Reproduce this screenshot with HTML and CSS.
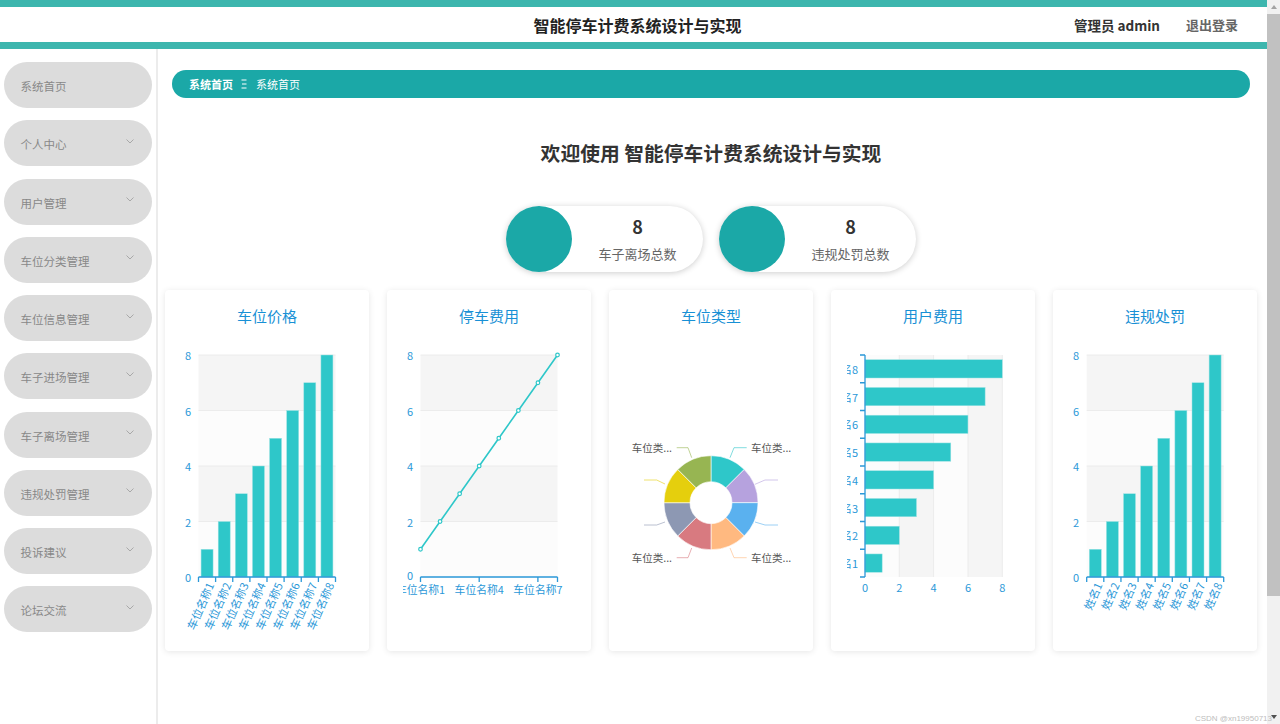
FILE: index.html
```html
<!DOCTYPE html>
<html lang="zh-CN">
<head>
<meta charset="utf-8">
<title>智能停车计费系统设计与实现</title>
<link rel="stylesheet" href="styles.css">
</head>
<body>
<div class="page">
  <div class="app">
    <header class="header">
      <div></div>
      <div class="title">智能停车计费系统设计与实现</div>
      <div class="user">
        <span class="admin">管理员 admin</span>
        <span class="logout">退出登录</span>
      </div>
    </header>
    <div class="main">
      <nav class="sidebar">
        <div class="menu-item"><span>系统首页</span></div>
        <div class="menu-item"><span>个人中心</span><svg class="chev" viewBox="0 0 8 5" width="8" height="5"><polyline points="0.5,0.5 4,4 7.5,0.5"/></svg></div>
        <div class="menu-item"><span>用户管理</span><svg class="chev" viewBox="0 0 8 5" width="8" height="5"><polyline points="0.5,0.5 4,4 7.5,0.5"/></svg></div>
        <div class="menu-item"><span>车位分类管理</span><svg class="chev" viewBox="0 0 8 5" width="8" height="5"><polyline points="0.5,0.5 4,4 7.5,0.5"/></svg></div>
        <div class="menu-item"><span>车位信息管理</span><svg class="chev" viewBox="0 0 8 5" width="8" height="5"><polyline points="0.5,0.5 4,4 7.5,0.5"/></svg></div>
        <div class="menu-item"><span>车子进场管理</span><svg class="chev" viewBox="0 0 8 5" width="8" height="5"><polyline points="0.5,0.5 4,4 7.5,0.5"/></svg></div>
        <div class="menu-item"><span>车子离场管理</span><svg class="chev" viewBox="0 0 8 5" width="8" height="5"><polyline points="0.5,0.5 4,4 7.5,0.5"/></svg></div>
        <div class="menu-item"><span>违规处罚管理</span><svg class="chev" viewBox="0 0 8 5" width="8" height="5"><polyline points="0.5,0.5 4,4 7.5,0.5"/></svg></div>
        <div class="menu-item"><span>投诉建议</span><svg class="chev" viewBox="0 0 8 5" width="8" height="5"><polyline points="0.5,0.5 4,4 7.5,0.5"/></svg></div>
        <div class="menu-item"><span>论坛交流</span><svg class="chev" viewBox="0 0 8 5" width="8" height="5"><polyline points="0.5,0.5 4,4 7.5,0.5"/></svg></div>
      </nav>
      <section class="content">
        <div class="breadcrumb">
          <span class="crumb-strong">系统首页</span>
          <svg class="sep" viewBox="0 0 6 10" width="6" height="10"><path d="M0.5 1H5.5M1 5H5.5M0.5 9H5.5"/></svg>
          <span>系统首页</span>
        </div>
        <h1 class="welcome">欢迎使用 智能停车计费系统设计与实现</h1>
        <div class="stats">
          <div class="stat">
            <div class="stat-circle"></div>
            <div class="stat-text"><div class="stat-num">8</div><div class="stat-label">车子离场总数</div></div>
          </div>
          <div class="stat">
            <div class="stat-circle"></div>
            <div class="stat-text"><div class="stat-num">8</div><div class="stat-label">违规处罚总数</div></div>
          </div>
        </div>
        <div class="charts">
          <!-- Chart 1 -->
          <div class="card">
            <div class="card-title">车位价格</div>
            <svg class="chart" viewBox="0 0 204 300" width="204" height="300">
              <rect class="band-a" x="33.5" y="19" width="137" height="55.5"/>
              <rect class="band-b" x="33.5" y="74.5" width="137" height="55.5"/>
              <rect class="band-a" x="33.5" y="130" width="137" height="55.5"/>
              <rect class="band-b" x="33.5" y="185.5" width="137" height="55.5"/>
              <path class="grid" d="M33.5 19H170.5M33.5 74.5H170.5M33.5 130H170.5M33.5 185.5H170.5"/>
              <g class="bar">
                <rect x="36.06" y="213.25" width="12" height="27.75"/>
                <rect x="53.19" y="185.5" width="12" height="55.5"/>
                <rect x="70.31" y="157.75" width="12" height="83.25"/>
                <rect x="87.44" y="130" width="12" height="111"/>
                <rect x="104.56" y="102.25" width="12" height="138.75"/>
                <rect x="121.69" y="74.5" width="12" height="166.5"/>
                <rect x="138.81" y="46.75" width="12" height="194.25"/>
                <rect x="155.94" y="19" width="12" height="222"/>
              </g>
              <path class="axis" d="M33.5 241H170.5M33.5 241V246M50.6 241V246M67.75 241V246M84.9 241V246M102 241V246M119.1 241V246M136.25 241V246M153.4 241V246M170.5 241V246"/>
              <g class="ylab">
                <text x="26" y="19">8</text><text x="26" y="74.5">6</text><text x="26" y="130">4</text><text x="26" y="185.5">2</text><text x="26" y="241">0</text>
              </g>
              <g class="xrot">
                <text transform="translate(45 247) rotate(-66)">车位名称1</text>
                <text transform="translate(62.2 247) rotate(-66)">车位名称2</text>
                <text transform="translate(79.3 247) rotate(-66)">车位名称3</text>
                <text transform="translate(96.4 247) rotate(-66)">车位名称4</text>
                <text transform="translate(113.6 247) rotate(-66)">车位名称5</text>
                <text transform="translate(130.7 247) rotate(-66)">车位名称6</text>
                <text transform="translate(147.8 247) rotate(-66)">车位名称7</text>
                <text transform="translate(164.9 247) rotate(-66)">车位名称8</text>
              </g>
            </svg>
          </div>
          <!-- Chart 2 -->
          <div class="card">
            <div class="card-title">停车费用</div>
            <svg class="chart" viewBox="0 0 204 300" width="204" height="300">
              <defs><clipPath id="clip2"><rect x="16" y="0" width="188" height="300"/></clipPath></defs>
              <rect class="band-a" x="33.5" y="19" width="137" height="55.5"/>
              <rect class="band-b" x="33.5" y="74.5" width="137" height="55.5"/>
              <rect class="band-a" x="33.5" y="130" width="137" height="55.5"/>
              <rect class="band-b" x="33.5" y="185.5" width="137" height="55.5"/>
              <path class="grid" d="M33.5 19H170.5M33.5 74.5H170.5M33.5 130H170.5M33.5 185.5H170.5"/>
              <path class="axis" d="M33.5 241H170.5M33.5 241V246M92.2 241V246M150.9 241V246M170.5 241V246"/>
              <polyline class="line" points="33.5,213.25 53.07,185.5 72.64,157.75 92.21,130 111.79,102.25 131.36,74.5 150.93,46.75 170.5,19"/>
              <g class="dot">
                <circle cx="33.5" cy="213.25" r="1.8"/><circle cx="53.07" cy="185.5" r="1.8"/><circle cx="72.64" cy="157.75" r="1.8"/><circle cx="92.21" cy="130" r="1.8"/><circle cx="111.79" cy="102.25" r="1.8"/><circle cx="131.36" cy="74.5" r="1.8"/><circle cx="150.93" cy="46.75" r="1.8"/><circle cx="170.5" cy="19" r="1.8"/>
              </g>
              <g class="ylab">
                <text x="26" y="19">8</text><text x="26" y="74.5">6</text><text x="26" y="130">4</text><text x="26" y="185.5">2</text><text x="26" y="239">0</text>
              </g>
              <g class="xlab small" clip-path="url(#clip2)">
                <text x="33.5" y="253">车位名称1</text>
                <text x="92.21" y="253">车位名称4</text>
                <text x="150.93" y="253">车位名称7</text>
              </g>
            </svg>
          </div>
          <!-- Chart 3 -->
          <div class="card">
            <div class="card-title">车位类型</div>
            <svg class="chart" viewBox="0 0 204 300" width="204" height="300">
              <g class="slices">
                <path fill="#2ec7c9" d="M102 119.7A47 47 0 0 1 135.23 133.47L116.85 151.85A21 21 0 0 0 102 145.7Z"/>
                <path fill="#b6a2de" d="M135.23 133.47A47 47 0 0 1 149 166.7L123 166.7A21 21 0 0 0 116.85 151.85Z"/>
                <path fill="#5ab1ef" d="M149 166.7A47 47 0 0 1 135.23 199.93L116.85 181.55A21 21 0 0 0 123 166.7Z"/>
                <path fill="#ffb980" d="M135.23 199.93A47 47 0 0 1 102 213.7L102 187.7A21 21 0 0 0 116.85 181.55Z"/>
                <path fill="#d87a80" d="M102 213.7A47 47 0 0 1 68.77 199.93L87.15 181.55A21 21 0 0 0 102 187.7Z"/>
                <path fill="#8d98b3" d="M68.77 199.93A47 47 0 0 1 55 166.7L81 166.7A21 21 0 0 0 87.15 181.55Z"/>
                <path fill="#e5cf0d" d="M55 166.7A47 47 0 0 1 68.77 133.47L87.15 151.85A21 21 0 0 0 81 166.7Z"/>
                <path fill="#97b552" d="M68.77 133.47A47 47 0 0 1 102 119.7L102 145.7A21 21 0 0 0 87.15 151.85Z"/>
              </g>
              <g class="lbl-line">
                <polyline stroke="#2ec7c9" points="121,121.7 125,111.7 137.7,111.7"/>
                <polyline stroke="#b6a2de" points="146,148.3 156,144 169,144"/>
                <polyline stroke="#5ab1ef" points="146,186 156,189 169,189"/>
                <polyline stroke="#ffb980" points="121,212 125,221.7 137.7,221.7"/>
                <polyline stroke="#d87a80" points="82.7,212 79,221.7 67.7,221.7"/>
                <polyline stroke="#8d98b3" points="56,186 47.7,189 35,189"/>
                <polyline stroke="#e5cf0d" points="56,148 47.7,144 35,144"/>
                <polyline stroke="#97b552" points="82.7,121.7 79,111.7 67.7,111.7"/>
              </g>
              <g class="pie-lab">
                <text x="142" y="111.7">车位类...</text>
                <text x="142" y="221.7">车位类...</text>
                <text class="end" x="63" y="111.7">车位类...</text>
                <text class="end" x="63" y="221.7">车位类...</text>
              </g>
            </svg>
          </div>
          <!-- Chart 4 -->
          <div class="card">
            <div class="card-title">用户费用</div>
            <svg class="chart" viewBox="0 0 204 300" width="204" height="300">
              <defs><clipPath id="clip4"><rect x="16" y="0" width="188" height="300"/></clipPath></defs>
              <rect class="band-b" x="34" y="19" width="34.3" height="222"/>
              <rect class="band-a" x="68.3" y="19" width="34.3" height="222"/>
              <rect class="band-b" x="102.6" y="19" width="34.36" height="222"/>
              <rect class="band-a" x="136.96" y="19" width="34.34" height="222"/>
              <path class="grid" d="M68.3 19V241M102.6 19V241M136.96 19V241M171.3 19V241"/>
              <g class="bar">
                <rect x="34" y="217.95" width="17.16" height="18.3"/>
                <rect x="34" y="190.2" width="34.32" height="18.3"/>
                <rect x="34" y="162.45" width="51.48" height="18.3"/>
                <rect x="34" y="134.7" width="68.64" height="18.3"/>
                <rect x="34" y="106.95" width="85.8" height="18.3"/>
                <rect x="34" y="79.2" width="102.96" height="18.3"/>
                <rect x="34" y="51.45" width="120.12" height="18.3"/>
                <rect x="34" y="23.7" width="137.28" height="18.3"/>
              </g>
              <path class="axis" d="M34 19V241M29 19H34M29 46.75H34M29 74.5H34M29 102.25H34M29 130H34M29 157.75H34M29 185.5H34M29 213.25H34M29 241H34"/>
              <g class="ylab" clip-path="url(#clip4)">
                <text x="27" y="227.1">姓名1</text><text x="27" y="199.4">姓名2</text><text x="27" y="171.6">姓名3</text><text x="27" y="143.9">姓名4</text><text x="27" y="116.1">姓名5</text><text x="27" y="88.4">姓名6</text><text x="27" y="60.6">姓名7</text><text x="27" y="32.9">姓名8</text>
              </g>
              <g class="xlab">
                <text x="34" y="251">0</text><text x="68.3" y="251">2</text><text x="102.6" y="251">4</text><text x="136.96" y="251">6</text><text x="171.3" y="251">8</text>
              </g>
            </svg>
          </div>
          <!-- Chart 5 -->
          <div class="card">
            <div class="card-title">违规处罚</div>
            <svg class="chart" viewBox="0 0 204 300" width="204" height="300">
              <rect class="band-a" x="33.7" y="19" width="137" height="55.5"/>
              <rect class="band-b" x="33.7" y="74.5" width="137" height="55.5"/>
              <rect class="band-a" x="33.7" y="130" width="137" height="55.5"/>
              <rect class="band-b" x="33.7" y="185.5" width="137" height="55.5"/>
              <path class="grid" d="M33.7 19H170.7M33.7 74.5H170.7M33.7 130H170.7M33.7 185.5H170.7"/>
              <g class="bar">
                <rect x="36.3" y="213.25" width="12" height="27.75"/>
                <rect x="53.4" y="185.5" width="12" height="55.5"/>
                <rect x="70.5" y="157.75" width="12" height="83.25"/>
                <rect x="87.6" y="130" width="12" height="111"/>
                <rect x="104.8" y="102.25" width="12" height="138.75"/>
                <rect x="121.9" y="74.5" width="12" height="166.5"/>
                <rect x="139" y="46.75" width="12" height="194.25"/>
                <rect x="156.1" y="19" width="12" height="222"/>
              </g>
              <path class="axis" d="M33.7 241H170.7M33.7 241V246M50.8 241V246M67.95 241V246M85.1 241V246M102.2 241V246M119.3 241V246M136.45 241V246M153.6 241V246M170.7 241V246"/>
              <g class="ylab">
                <text x="26" y="19">8</text><text x="26" y="74.5">6</text><text x="26" y="130">4</text><text x="26" y="185.5">2</text><text x="26" y="241">0</text>
              </g>
              <g class="xrot">
                <text transform="translate(45.2 247) rotate(-66)">姓名1</text>
                <text transform="translate(62.4 247) rotate(-66)">姓名2</text>
                <text transform="translate(79.5 247) rotate(-66)">姓名3</text>
                <text transform="translate(96.6 247) rotate(-66)">姓名4</text>
                <text transform="translate(113.8 247) rotate(-66)">姓名5</text>
                <text transform="translate(130.9 247) rotate(-66)">姓名6</text>
                <text transform="translate(148 247) rotate(-66)">姓名7</text>
                <text transform="translate(165.1 247) rotate(-66)">姓名8</text>
              </g>
            </svg>
          </div>
        </div>
      </section>
    </div>
  </div>
  <div class="scrollbar">
    <div class="sb-arrow up"></div>
    <div class="sb-thumb"></div>
    <div class="sb-track"></div>
    <div class="sb-arrow down"></div>
  </div>
  <div class="watermark">CSDN @xn19950713</div>
</div>
</body>
</html>
```

FILE: styles.css
```css
* { box-sizing: border-box; }
html, body { margin: 0; padding: 0; }
body {
  font-family: "Noto Sans CJK SC", "Noto Sans", sans-serif;
  background: #fff;
  color: #333;
}
.page {
  position: relative;
  display: flex;
  width: 1280px;
  height: 724px;
  overflow: hidden;
}
.app {
  width: 1267px;
  display: flex;
  flex-direction: column;
}

/* header */
.header {
  height: 49px;
  border-top: 7px solid #3db6ae;
  border-bottom: 7px solid #3db6ae;
  display: grid;
  grid-template-columns: 1fr auto 1fr;
  align-items: center;
  padding-left: 8px;
}
.title {
  font-size: 16px;
  font-weight: 700;
  color: #222;
  line-height: 20px;
}
.user {
  display: flex;
  justify-content: flex-end;
  align-items: center;
  gap: 26px;
  padding-right: 29px;
  font-size: 13.5px;
  font-weight: 700;
}
.admin { color: #333; }
.logout { color: #666; font-size: 13px; }

/* main */
.main {
  flex: 1;
  display: flex;
  min-height: 0;
}
.sidebar {
  width: 158px;
  border-right: 2px solid #ececec;
  padding: 13px 0 0 4px;
  display: flex;
  flex-direction: column;
  gap: 12.26px;
}
.menu-item {
  width: 148px;
  height: 46px;
  border-radius: 23px;
  background: #dcdcdc;
  display: flex;
  align-items: center;
  justify-content: space-between;
  padding: 2px 18px 0 16.5px;
  font-size: 11.5px;
  color: #888;
}
.chev {
  fill: none;
  stroke: #a8a8a8;
  stroke-width: 1;
  margin-bottom: 6px;
}

/* content */
.content {
  flex: 1;
  padding: 21px 10px 0 7px;
}
.breadcrumb {
  margin: 0 7px 0 7px;
  height: 28px;
  border-radius: 14px;
  background: #1ba8a7;
  display: flex;
  align-items: center;
  padding-left: 17px;
  color: #fff;
  font-size: 11px;
  gap: 8px;
}
.crumb-strong { font-weight: 700; }
.sep {
  fill: none;
  stroke: #fff;
  stroke-width: 1;
  margin: 0 1px 0 0;
}
.welcome {
  margin: 41px 0 0 0;
  text-align: center;
  font-size: 19.8px;
  line-height: 28px;
  font-weight: 700;
  color: #333;
}
.stats {
  margin-top: 39px;
  display: flex;
  justify-content: center;
  gap: 16px;
}
.stat {
  width: 197px;
  height: 66px;
  border-radius: 33px;
  background: #fff;
  box-shadow: 0 1px 6px rgba(0, 0, 0, 0.2);
  display: flex;
}
.stat-circle {
  width: 66px;
  height: 66px;
  border-radius: 50%;
  background: #1ba8a7;
  flex: none;
}
.stat-text {
  flex: 1;
  display: flex;
  flex-direction: column;
  align-items: center;
  padding-top: 8px;
}
.stat-num {
  font-size: 18px;
  font-weight: 700;
  line-height: 24px;
  color: #333;
}
.stat-label {
  margin-top: 6px;
  font-size: 13px;
  line-height: 20px;
  color: #666;
}

/* charts */
.charts {
  margin-top: 18px;
  display: flex;
  gap: 18px;
}
.card {
  width: 204px;
  height: 361px;
  background: #fff;
  border-radius: 4px;
  box-shadow: 0 1px 6px rgba(0, 0, 0, 0.1);
  padding-top: 16px;
}
.card-title {
  text-align: center;
  font-size: 15px;
  line-height: 20px;
  color: #1890d5;
}
.chart {
  display: block;
  margin-top: 10px;
}
.chart text {
  font-family: "Noto Sans CJK SC", "Noto Sans", sans-serif;
}
.band-a { fill: #f5f5f5; }
.band-b { fill: #fcfcfc; }
.grid { stroke: #ececec; stroke-width: 1; fill: none; }
.bar rect { fill: #2ec7c9; stroke: #9fe3e4; stroke-width: 0.5; }
.axis { stroke: #2b98d8; stroke-width: 1.3; fill: none; }
.ylab text {
  fill: #2b98d8;
  font-size: 11px;
  text-anchor: end;
  dominant-baseline: central;
}
.xlab text {
  fill: #2b98d8;
  font-size: 11px;
  text-anchor: middle;
  dominant-baseline: central;
}
.xlab.small text { font-size: 10.8px; }
.xrot text {
  fill: #2b98d8;
  font-size: 11px;
  text-anchor: end;
  dominant-baseline: central;
}
.line { fill: none; stroke: #2ec7c9; stroke-width: 1.6; }
.dot circle { fill: #fff; stroke: #2ec7c9; stroke-width: 1.2; }
.slices path { stroke: #fff; stroke-width: 0.6; }
.lbl-line polyline { fill: none; stroke-width: 1; opacity: 0.6; }
.pie-lab text {
  fill: #555;
  font-size: 10.5px;
  dominant-baseline: central;
}
.pie-lab text.end { text-anchor: end; }

/* scrollbar */
.scrollbar {
  width: 13px;
  background: #f1f1f1;
  display: flex;
  flex-direction: column;
  align-items: center;
}
.sb-arrow {
  width: 0;
  height: 0;
  border-left: 3px solid transparent;
  border-right: 3px solid transparent;
  flex: none;
}
.sb-arrow.up {
  border-bottom: 4px solid #a3a3a3;
  margin: 5px 0 5px;
}
.sb-arrow.down {
  border-top: 4px solid #505050;
  margin: 5px 0 5px;
}
.sb-thumb {
  width: 13px;
  height: 582px;
  background: #c1c1c1;
  flex: none;
}
.sb-track { flex: 1; }

.watermark {
  position: absolute;
  right: 8px;
  bottom: 1px;
  font-family: "Liberation Sans", sans-serif;
  font-size: 8px;
  color: #bdbdbd;
}
```
